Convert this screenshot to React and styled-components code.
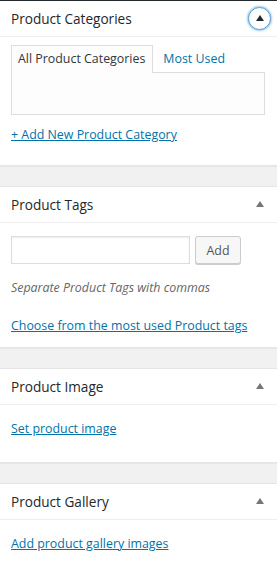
import styled, { createGlobalStyle } from 'styled-components';

const GlobalStyle = createGlobalStyle`
  html, body {
    margin: 0;
    padding: 0;
    background: #f1f1f1;
  }
  body {
    font-family: 'Open Sans', 'Noto Sans', sans-serif;
    font-size: 12.4px;
    color: #444;
  }
  * {
    box-sizing: border-box;
  }
`;

export default function App() {
  return (
    <>
      <GlobalStyle />
      <Page>
        <Postbox $first>
          <Header>
            <Title>Product Categories</Title>
            <Toggle $focused aria-label="Toggle panel">
              <Arrow $dark />
            </Toggle>
          </Header>
          <Inside $top={9} $bottom={21}>
            <Tabs>
              <Tab $active>All Product Categories</Tab>
              <Tab>Most Used</Tab>
            </Tabs>
            <TabPanel />
            <TextLink href="#" $top={10}>
              + Add New Product Category
            </TextLink>
          </Inside>
        </Postbox>

        <Postbox>
          <Header>
            <Title>Product Tags</Title>
            <Toggle aria-label="Toggle panel">
              <Arrow />
            </Toggle>
          </Header>
          <Inside $top={13} $bottom={12}>
            <TagRow>
              <TagInput type="text" />
              <Button>Add</Button>
            </TagRow>
            <Hint>Separate Product Tags with commas</Hint>
            <TextLink href="#" $top={19}>
              Choose from the most used Product tags
            </TextLink>
          </Inside>
        </Postbox>

        <Postbox>
          <Header>
            <Title>Product Image</Title>
            <Toggle aria-label="Toggle panel">
              <Arrow />
            </Toggle>
          </Header>
          <Inside $top={14} $bottom={24}>
            <TextLink href="#">Set product image</TextLink>
          </Inside>
        </Postbox>

        <Postbox>
          <Header>
            <Title>Product Gallery</Title>
            <Toggle aria-label="Toggle panel">
              <Arrow />
            </Toggle>
          </Header>
          <Inside $top={14} $bottom={24}>
            <TextLink href="#">Add product gallery images</TextLink>
          </Inside>
        </Postbox>
      </Page>
    </>
  );
}

const Page = styled.div`
  width: 277px;
  height: 564px;
  overflow: hidden;
  background: #f1f1f1;
`;

const Postbox = styled.section`
  background: #fff;
  border-top: 1px solid ${p => (p.$first ? '#23282d' : '#e5e5e5')};
  border-bottom: 1px solid #e5e5e5;
  box-shadow: 0 1px 1px rgba(0, 0, 0, 0.04);
  margin-bottom: 20px;
`;

const Header = styled.div`
  display: flex;
  align-items: center;
  justify-content: space-between;
  height: 36px;
  padding: 0 6px 0 11px;
  border-bottom: 1px solid #eee;
`;

const Title = styled.h2`
  margin: 0;
  font-size: 13.6px;
  font-weight: 400;
  color: #23282d;
  line-height: 1.4;
`;

const Toggle = styled.button`
  display: flex;
  align-items: center;
  justify-content: center;
  width: 23px;
  height: 23px;
  padding: 0;
  border-radius: 50%;
  background: #fff;
  border: ${p => (p.$focused ? '1.5px solid #5b9dd9' : '0')};
  box-shadow: ${p => (p.$focused ? '0 0 2px 1px rgba(30, 140, 190, 0.45)' : 'none')};
  cursor: pointer;
`;

const Arrow = styled.span`
  width: 0;
  height: 0;
  border-left: 4px solid transparent;
  border-right: 4px solid transparent;
  border-bottom: 6px solid ${p => (p.$dark ? '#23282d' : '#72777c')};
  margin-top: -1px;
`;

const Inside = styled.div`
  display: flex;
  flex-direction: column;
  align-items: flex-start;
  padding: ${p => p.$top}px 12px ${p => p.$bottom}px 11px;
`;

const Tabs = styled.div`
  display: flex;
  align-items: flex-end;
  height: 27px;
`;

const Tab = styled.div`
  height: 28px;
  padding: 0 7px 0 6px;
  margin-right: 3px;
  line-height: 26px;
  font-size: 12.4px;
  color: ${p => (p.$active ? '#32373c' : '#0073aa')};
  background: ${p => (p.$active ? '#fdfdfd' : 'transparent')};
  border: 1px solid ${p => (p.$active ? '#ddd' : 'transparent')};
  border-bottom: 0;
  position: relative;
  z-index: 1;
`;

const TabPanel = styled.div`
  width: 254px;
  height: 43px;
  margin-top: -1px;
  border: 1px solid #ddd;
  background: #fdfdfd;
`;

const TextLink = styled.a`
  margin-top: ${p => p.$top || 0}px;
  font-size: 12.4px;
  line-height: 19px;
  color: #0073aa;
  text-decoration: underline;
`;

const TagRow = styled.div`
  display: flex;
  align-items: center;
  gap: 5px;
`;

const TagInput = styled.input`
  width: 179px;
  height: 28px;
  margin: 0;
  padding: 3px 5px;
  border: 1px solid #ddd;
  box-shadow: inset 0 1px 2px rgba(0, 0, 0, 0.07);
  background: #fff;
  font-family: inherit;
  font-size: 12.4px;
  outline: none;
`;

const Button = styled.button`
  width: 46px;
  height: 28px;
  padding: 0 10px;
  font-family: inherit;
  font-size: 12.4px;
  color: #555;
  background: #f7f7f7;
  border: 1px solid #ccc;
  border-radius: 3px;
  box-shadow: 0 1px 0 #ccc;
  cursor: pointer;
`;

const Hint = styled.p`
  margin: 14px 0 0;
  font-size: 12.4px;
  line-height: 19px;
  font-style: italic;
  color: #666;
`;
